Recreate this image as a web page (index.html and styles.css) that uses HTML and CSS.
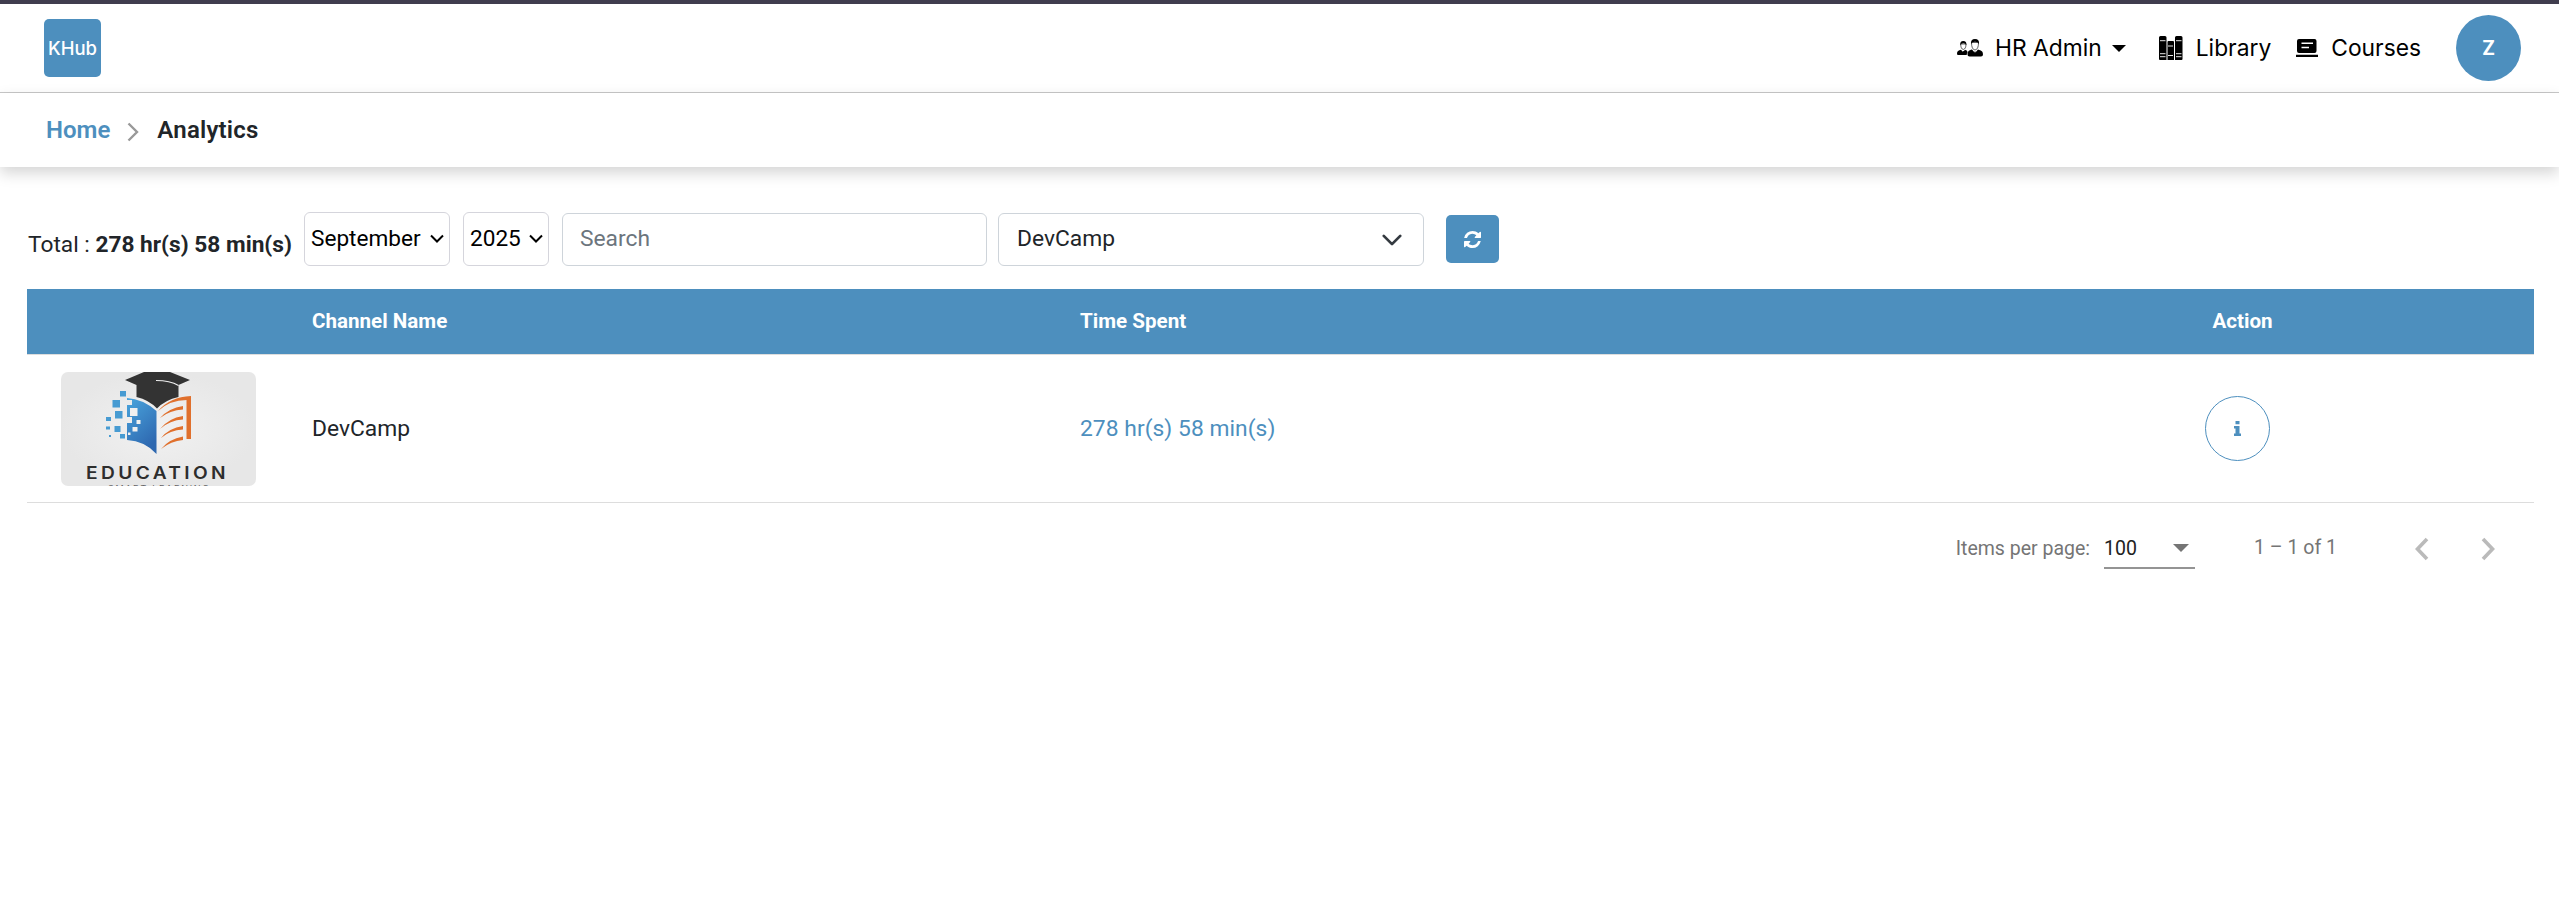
FILE: index.html
```html
<!DOCTYPE html>
<html lang="en">
<head>
<meta charset="utf-8">
<title>Analytics</title>
<link rel="stylesheet" href="styles.css">
</head>
<body>
<header class="topbar">
  <div class="logo">KHub</div>
  <nav class="nav">
    <a class="nav-item hr"><svg class="ic-people" viewBox="0 0 26 18"><path d="M0 14.500c0-2.500 1.500-3 4-3.800l2 2.300 2-2.300c1.500.5 2.300 1 2.500 2.300-.5 1-.8 1.800-.8 3H1q-1 0-1-1.500zM10.500 15.500c0-3.500 1.500-4 4.500-5l3 3.500 3-3.500c3.500 1 5 2 5 5q0 2-2 2H12.500q-2 0-2-2z"/><path d="M3.700 5q0 5 2.600 5.500Q9 10 9 5zM14.500 3.500q0 7 3.500 7.500 3.500-.5 3.500-7.500z" fill="#fff" stroke="#222" stroke-width=".7"/><path d="M3.200 6q-.3-4 3-4 3.600 0 3.200 4-1-1.700-3-1.700T3.200 6zM14 5q-.5-5 4-5t4 5q-1-2.300-4-2.300T14 5z"/><path d="M5.900 12h.8l.3 3h-1.400zM17.500 12.500h1l.4 3.500h-1.800z"/></svg><span>HR Admin</span><i class="caret"></i></a>
    <a class="nav-item lib"><svg class="ic-books" viewBox="0 0 24 24"><path d="M0 1.500Q0 0 1.500 0h4.500q1.500 0 1.500 1.500V24H1q-1 0-1-1zM8.500 6q0-1 1-1h4.500q1 0 1 1v18H8.500zM16 1.500Q16 0 17.500 0h4.500q1.500 0 1.500 1.500V23q0 1-1 1H16z"/><path d="M1 4.700h5.500M1 17.700h5.500M1 20.700h5.500M9 10h5M9 19.500h5M17 4.700h5.500M17 17.700h5.500M17 20.700h5.500" stroke="#fff" stroke-width=".9"/></svg><span>Library</span></a>
    <a class="nav-item crs"><svg class="ic-course" viewBox="0 0 22 18"><path d="M3 0h15.500q2 0 2 2v10q0 2-2 2H3q-2 0-2-2V2q0-2 2-2zM0 15.700h22V18H0z"/><path d="M5.500 4.200h11.500M5.500 8.500h7.500" fill="none" stroke="#fff" stroke-width="1.600"/></svg><span>Courses</span></a>
    <div class="avatar">Z</div>
  </nav>
</header>
<div class="crumbs"><a class="home">Home</a><svg class="ic-crumb" viewBox="0 0 12 20"><path d="M1.500 1.500 10 10l-8.500 8.500" fill="none" stroke="#999" stroke-width="2.400"/></svg><span>Analytics</span></div>
<main class="main">
  <div class="filters">
    <div class="total">Total : <b>278 hr(s) 58 min(s)</b></div>
    <div class="mini month"><span>September</span><svg class="ic-down" viewBox="0 0 14 10"><path d="M1 1.500 7 7.500l6-6" fill="none" stroke="#000" stroke-width="2"/></svg></div>
    <div class="mini year"><span>2025</span><svg class="ic-down" viewBox="0 0 14 10"><path d="M1 1.500 7 7.500l6-6" fill="none" stroke="#000" stroke-width="2"/></svg></div>
    <input class="search" placeholder="Search">
    <div class="channel"><span>DevCamp</span><svg class="ic-sel" viewBox="0 0 16 16"><path d="m2 5 6 6 6-6" fill="none" stroke="#343a40" stroke-width="2" stroke-linecap="round" stroke-linejoin="round"/></svg></div>
    <button class="refresh" aria-label="Refresh"><svg class="ic-refresh" viewBox="0 0 1536 1536"><path fill="#fff" d="M1511 928q0 5-1 7-64 268-268 434.500T764 1536q-146 0-282.500-55T238 1324l-129 129q-19 19-45 19t-45-19-19-45V960q0-26 19-45t45-19h448q26 0 45 19t19 45-19 45l-137 137q71 66 161 102t187 36q134 0 250-65t186-179q11-17 53-117 8-23 30-23h192q13 0 22.500 9.500t9.500 22.500zm25-800v448q0 26-19 45t-45 19h-448q-26 0-45-19t-19-45 19-45l138-138Q969 256 768 256q-134 0-250 65T332 500q-11 17-53 117-8 23-30 23H50q-13 0-22.500-9.500T18 608v-7q65-268 270-434.500T768 0q146 0 284 55.500T1297 212l130-129q19-19 45-19t45 19 19 45z"/></svg></button>
  </div>
  <div class="row head"><span></span><span>Channel Name</span><span>Time Spent</span><span class="act act-head">Action</span></div>
  <div class="row item">
    <svg class="thumb" viewBox="0 0 195 114">
      <defs><linearGradient id="book" x1="0" y1="0" x2=".5" y2="1"><stop offset="0" stop-color="#4aa5dd"/><stop offset="1" stop-color="#2e68b0"/></linearGradient><radialGradient id="paper"><stop offset="0" stop-color="#f1f1f1"/><stop offset="1" stop-color="#e7e7e7"/></radialGradient></defs>
      <path d="M0 0h195v114H0z" fill="url(#paper)"/>
      <path d="M66 26q16 1 29.500 13v43Q84 69 66 68V51h5v-6h-5V33h5v-5h-5z" fill="url(#book)"/>
      <path d="M69 36h7.500v8H69zM75.500 48h4v4h-4zM71.500 55h5v4.500h-5zM67 60.500h2.500V63H67z" fill="#f0f0f0"/>
      <path d="M59 19h6v5.500h-6zM51.500 28h7.500v7.500h-7.500zM54 39h7.500v7.500H54zM45 45h5v4h-5zM45 54.500h4v3h-4zM53.500 54h6v6h-6zM59 62h5v4.500h-5zM48 63h2v2h-2z" fill="#479bd2"/>
      <path d="M83 0h26l20 8-11.500 5V25Q104 28 96 36.500 88 28 75.500 25V13L64 8z" fill="#333"/>
      <path d="M95 8.500q14 0 22.500 5" fill="none" stroke="#eee" stroke-width="1.200"/>
      <path d="M97 39q12-14 33-15v43h-4.500V28Q109 28 97 39zM99 46q9-10 23-12v3.500Q109 38 99 46zM99 57q9-11 23-13v3.500Q109 48 99 57zM100 66q8-10 22-12v3.500Q109 58 100 66zM100 77q8-10 22-12.500V68q-12 1-22 9z" fill="#e0702d"/>
      <text x="25" y="107" class="edu" textLength="143" lengthAdjust="spacingAndGlyphs">EDUCATION</text>
      <text x="47" y="119.500" class="smart" textLength="101">SMART LEARNING</text>
    </svg>
    <span>DevCamp</span><span class="time">278 hr(s) 58 min(s)</span>
    <span class="act"><span class="info"><svg class="ic-info" viewBox="0 0 7 15"><path d="M1.500 0h4v3.200h-4zM0 5h5.500v7.500H7V15H0v-2.500h1.500v-5H0z" fill="#4d8fbe"/></svg></span></span>
  </div>
  <div class="pager">
    <span class="ipp">Items per page:</span>
    <div class="size"><span>100</span><i class="tri"></i></div>
    <span class="range">1 – 1 of 1</span>
    <svg class="ic-page" viewBox="0 0 14 24"><path d="M12 2 2.500 12l9.500 10" fill="none" stroke="#bababa" stroke-width="3.600"/></svg>
    <svg class="ic-page next" viewBox="0 0 14 24"><path d="m2 2 9.500 10L2 22" fill="none" stroke="#bababa" stroke-width="3.600"/></svg>
  </div>
</main>
</body>
</html>
```
FILE: styles.css
```css
* { box-sizing: border-box; }
body { margin: 0; background: #fff; color: #212529; font-family: Roboto, sans-serif; font-size: 22.800px; }
svg { display: block; flex: none; }
.topbar { height: 93px; border-top: 4px solid #403d4e; border-bottom: 1px solid #c8c8c8; display: flex; align-items: center; justify-content: space-between; padding: 0 38px 0 44px; }
.logo { width: 57px; height: 58px; border-radius: 5px; background: #4d8fbe; color: #fff; display: flex; align-items: center; justify-content: center; font: 500 18.500px Inter, sans-serif; padding-bottom: 1px; }
.nav { display: flex; align-items: center; color: #000; font: 22.800px Inter, sans-serif; }
.nav-item { display: flex; align-items: center; white-space: nowrap; }
.nav-item span { padding-bottom: 1px; }
.ic-people { width: 26px; height: 18px; margin-right: 12px; }
.caret { border: 7px solid transparent; border-top-color: #000; border-bottom: 0; margin-left: 10px; }
.lib { margin-left: 33px; }
.ic-books { width: 24px; height: 24px; margin-right: 13px; }
.crs { margin-left: 25px; }
.ic-course { width: 22px; height: 18px; margin-right: 13px; }
.avatar { width: 65px; height: 66px; border-radius: 50%; background: #4d8fbe; color: #fff; display: flex; align-items: center; justify-content: center; font: 700 20px Roboto, sans-serif; margin-left: 35px; }
.crumbs { height: 74px; display: flex; align-items: center; padding: 0 46px; font-size: 24px; font-weight: 600; box-shadow: 0 6px 14px rgba(0,0,0,.17); }
.crumbs span { letter-spacing: .2px; }
.home { color: #4d8fbe; }
.ic-crumb { width: 12px; height: 20px; margin: 4px 18px 0 17px; }
.main { padding: 45px 25px 0 27px; }
.filters { display: flex; align-items: flex-start; height: 77px; }
.total { width: 277px; padding: 19px 0 0 1px; white-space: nowrap; font-size: 22.700px; }
.mini { height: 54px; border: 1px solid #d5d5dc; border-radius: 6px; display: flex; align-items: center; justify-content: space-between; padding: 0 5px 1px 6px; color: #000; font-size: 22.600px; }
.month { width: 146px; }
.year { width: 86px; margin-left: 13px; }
.ic-down { width: 14px; height: 10px; }
.search, .channel { margin-top: 1px; height: 53px; width: 425px; border: 1px solid #ced4da; border-radius: 6px; padding: 0 17px 2px; background: #fff; color: #212529; font: 22.800px Roboto, sans-serif; }
.search { margin-left: 13px; }
.search::placeholder { color: #6c757d; opacity: 1; }
.channel { margin-left: 11px; width: 426px; padding-left: 18px; display: flex; align-items: center; justify-content: space-between; }
.ic-sel { width: 22px; height: 22px; margin: 2px 3px 0 0; }
.refresh { margin: 3px 0 0 22px; width: 53px; height: 48px; border: 0; border-radius: 5px; background: #4d8fbe; display: flex; align-items: center; justify-content: center; padding: 0; }
.ic-refresh { width: 17px; height: 17px; }
.row { display: grid; grid-template-columns: 285px 768px 1fr 594px; align-items: center; border-bottom: 1px solid #ddd; }
.head { height: 66px; background: #4d8fbe; background-clip: padding-box; color: #fff; font-size: 20.600px; font-weight: 700; padding-bottom: 1px; }
.item { height: 148px; }
.item > span { padding-bottom: 1px; }
.act { display: flex; width: 65px; justify-content: center; margin-left: 265px; }
.act-head { margin-left: 270px; }
.thumb { width: 195px; height: 114px; margin-left: 34px; border-radius: 7px; }
.edu { font: 600 17px Inter, sans-serif; fill: #2d2d2d; letter-spacing: 3px; }
.smart { font: 9px Inter, sans-serif; fill: #666; }
.time { color: #4d8fbe; letter-spacing: .05px; }
.info { width: 65px; height: 65px; border: 1px solid #4d8fbe; border-radius: 50%; display: flex; align-items: center; justify-content: center; flex: none; }
.ic-info { width: 7px; height: 15px; }
.pager { height: 92px; display: flex; align-items: center; justify-content: flex-end; font-size: 19.500px; color: #757575; padding-right: 39px; }
.ipp { padding-bottom: 1px; }
.size { width: 91px; height: 39px; margin: 0 59px 0 14px; border-bottom: 2px solid #949494; display: flex; align-items: center; justify-content: space-between; color: #212121; padding-right: 6px; }
.tri { border: 8px solid transparent; border-top-color: #757575; border-bottom: 0; }
.range { margin-right: 78px; padding-bottom: 3px; }
.ic-page { width: 14px; height: 24px; }
.next { margin-left: 52px; }
```
